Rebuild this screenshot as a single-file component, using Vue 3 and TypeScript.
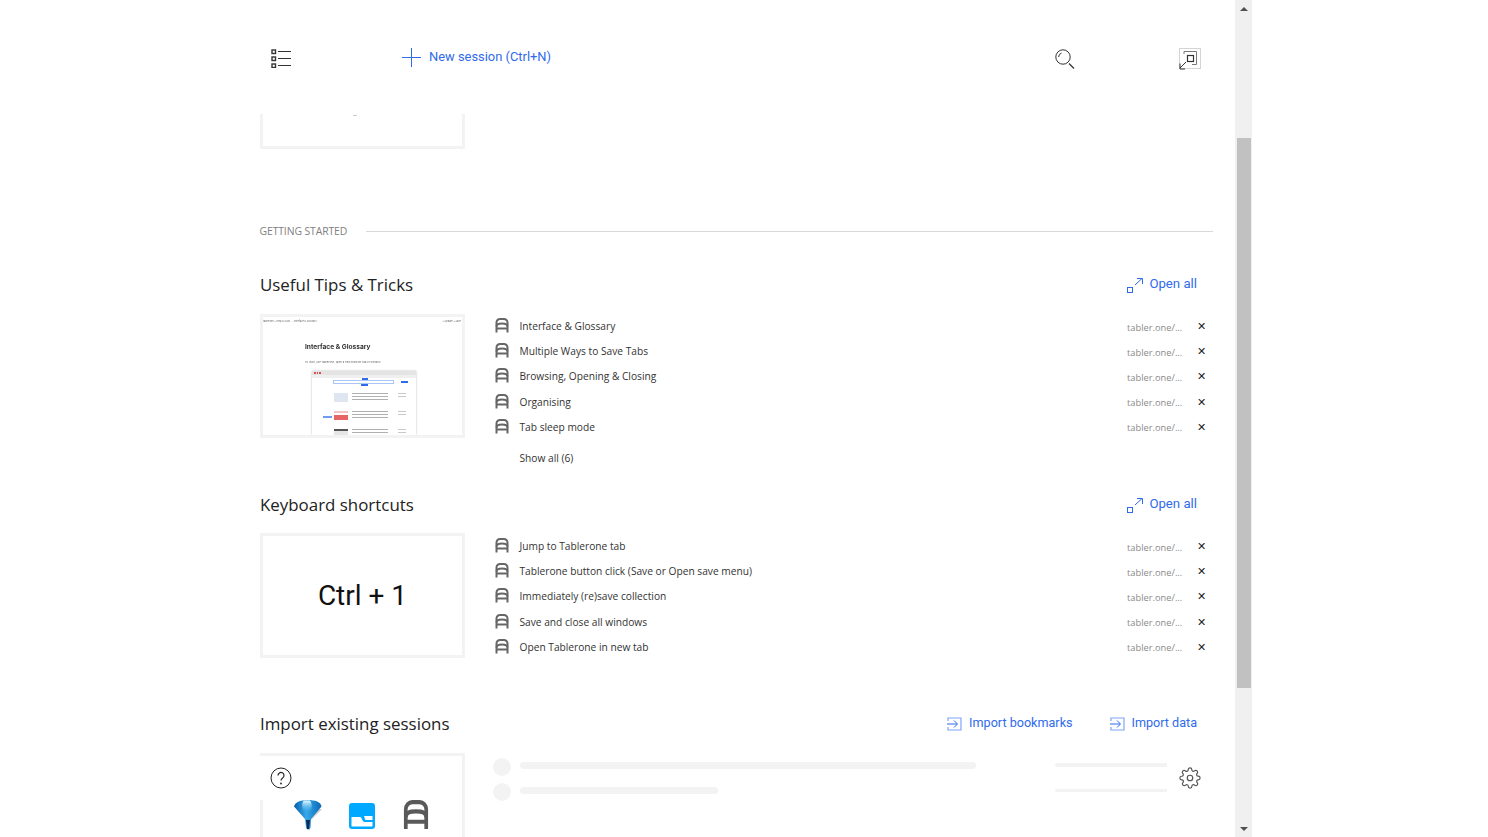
<script setup lang="ts">
interface Row { title: string }
const tips: Row[] = [
  { title: 'Interface & Glossary' },
  { title: 'Multiple Ways to Save Tabs' },
  { title: 'Browsing, Opening & Closing' },
  { title: 'Organising' },
  { title: 'Tab sleep mode' },
]
const keys: Row[] = [
  { title: 'Jump to Tablerone tab' },
  { title: 'Tablerone button click (Save or Open save menu)' },
  { title: 'Immediately (re)save collection' },
  { title: 'Save and close all windows' },
  { title: 'Open Tablerone in new tab' },
]
const miniRows = [1, 2, 3]
</script>

<template>
  <div class="shell">
    <div class="page">
      <header class="top">
        <svg class="ic-list" width="20" height="19" viewBox="0 0 20 19" fill="none" stroke="#333">
          <rect x="1" y="1" width="3.500" height="3.500" stroke-width="1.400" />
          <rect x="1" y="8" width="3.500" height="3.500" stroke-width="1.400" />
          <rect x="1" y="15" width="3.500" height="3.500" stroke-width="1.400" />
          <path d="M7 2.500h13M7 9.500h13M7 16.500h13" stroke-width="1" />
        </svg>
        <div class="new">
          <svg width="19" height="19" viewBox="0 0 19 19" stroke="#2f6bec" fill="none"><path d="M9.500 0v19M0 9.500h19" /></svg>
          <span>New session (Ctrl+N)</span>
        </div>
        <svg class="ic-search" width="20" height="20" viewBox="0 0 20 20" fill="none" stroke="#333">
          <circle cx="8" cy="8" r="7.200" />
          <path d="M3.600 8a4.400 4.400 0 0 1 3-4" />
          <path d="M14 14.500l5 5" stroke-width="1.300" />
        </svg>
        <svg class="ic-expand" width="22" height="22" viewBox="0 0 22 22" fill="none">
          <rect x="0.500" y="0.500" width="21" height="20" stroke="#d4d4d4" />
          <path d="M5 6V3.500h12.500v13H13" stroke="#777" />
          <rect x="8.500" y="7.500" width="6" height="6" stroke="#333" stroke-width="1.200" />
          <path d="M7 14l-6 6M1 15.500V21h5" stroke="#333" />
        </svg>
      </header>

      <div class="content">
        <div class="stub"><i></i></div>

        <div class="label">
          <span>GETTING STARTED</span>
          <hr />
        </div>

        <section class="tips">
          <div class="head">
            <h2>Useful Tips &amp; Tricks</h2>
            <a class="link open">
              <svg width="16" height="15" viewBox="0 0 16 15" fill="none" stroke="#2f6bec">
                <rect x="0.500" y="9.500" width="5" height="5" />
                <path d="M8 7l7-6.500M10 .500h5.500V6" />
              </svg>
              Open all
            </a>
          </div>
          <div class="body">
            <div class="card thumb">
              <div class="m-top"><span>tablerone • Help &amp; Guid...  ·  Interface &amp; Glossary</span><span>◦ Update  ▪ Save</span></div>
              <div class="m-title">Interface &amp; Glossary</div>
              <div class="m-sub">To start, use Tablerone, open a new browser tab or window.</div>
              <div class="m-browser">
                <div class="m-bar"><b></b><b></b><b></b></div>
                <div class="m-addr"></div>
                <div class="m-search"><i></i><em></em></div>
                <span class="m-btn right"></span>
                <span class="m-btn left"></span>
                <div class="m-block" v-for="n in miniRows" :key="n">
                  <div class="m-pic" :class="{ red: n === 2, dark: n === 3 }"></div>
                  <div class="m-lines"><s></s><s></s><s></s></div>
                  <div class="m-side"><s></s><s></s></div>
                </div>
              </div>
            </div>
            <ul class="rows">
              <li v-for="r in tips" :key="r.title">
                <svg class="logo" width="14" height="15" viewBox="0 0 14 15" fill="none" stroke="#666" stroke-width="2">
                  <path d="M1.500 14.500V4.500A3.500 3.500 0 0 1 5 1h4a3.500 3.500 0 0 1 3.500 3.500v10" />
                  <path d="M1.500 8.500C1.500 6 3.500 5.500 7 5.500s5.500.5 5.500 3M1.500 10.500h11" />
                </svg>
                <span class="title">{{ r.title }}</span>
                <span class="url">tabler.one/...</span>
                <span class="close">✕</span>
              </li>
              <li class="show"><span class="title">Show all (6)</span></li>
            </ul>
          </div>
        </section>

        <section class="keys">
          <div class="head">
            <h2>Keyboard shortcuts</h2>
            <a class="link open">
              <svg width="16" height="15" viewBox="0 0 16 15" fill="none" stroke="#2f6bec">
                <rect x="0.500" y="9.500" width="5" height="5" />
                <path d="M8 7l7-6.500M10 .500h5.500V6" />
              </svg>
              Open all
            </a>
          </div>
          <div class="body">
            <div class="card shortcut">Ctrl + 1</div>
            <ul class="rows">
              <li v-for="r in keys" :key="r.title">
                <svg class="logo" width="14" height="15" viewBox="0 0 14 15" fill="none" stroke="#666" stroke-width="2">
                  <path d="M1.500 14.500V4.500A3.500 3.500 0 0 1 5 1h4a3.500 3.500 0 0 1 3.500 3.500v10" />
                  <path d="M1.500 8.500C1.500 6 3.500 5.500 7 5.500s5.500.5 5.500 3M1.500 10.500h11" />
                </svg>
                <span class="title">{{ r.title }}</span>
                <span class="url">tabler.one/...</span>
                <span class="close">✕</span>
              </li>
            </ul>
          </div>
        </section>

        <section class="imports">
          <div class="head">
            <h2>Import existing sessions</h2>
            <div class="links">
              <a class="link">
                <svg width="15" height="14" viewBox="0 0 15 14" fill="none" stroke="#2f6bec">
                  <path d="M1 4V1h13v12H1v-3" stroke="#7fa6f5" stroke-width="1.200" />
                  <path d="M0 7h10M7 3.500L10.500 7 7 10.500" />
                </svg>
                Import bookmarks
              </a>
              <a class="link">
                <svg width="15" height="14" viewBox="0 0 15 14" fill="none" stroke="#2f6bec">
                  <path d="M1 4V1h13v12H1v-3" stroke="#7fa6f5" stroke-width="1.200" />
                  <path d="M0 7h10M7 3.500L10.500 7 7 10.500" />
                </svg>
                Import data
              </a>
            </div>
          </div>
          <div class="body">
            <div class="card sources">
              <svg class="help" width="22" height="22" viewBox="0 0 22 22" fill="none" stroke="#222">
                <circle cx="11" cy="11" r="10" />
                <path d="M8 8.500a3 3 0 1 1 4.600 2.500c-1 .7-1.600 1.300-1.600 2.500" stroke-width="1.200" />
                <circle cx="11" cy="16.500" r=".9" fill="#222" stroke="none" />
              </svg>
              <div class="logos">
                <svg width="28" height="31" viewBox="0 0 28 31">
                  <defs>
                    <linearGradient id="fn" x1="0" x2="1" y1="0" y2="0">
                      <stop offset="0" stop-color="#0a5ea8" />
                      <stop offset=".45" stop-color="#35a8ea" />
                      <stop offset="1" stop-color="#0867b5" />
                    </linearGradient>
                    <linearGradient id="fh" x1="0" x2="0" y1="0" y2="1">
                      <stop offset="0" stop-color="#eefaff" />
                      <stop offset="1" stop-color="#5cc0f5" stop-opacity="0" />
                    </linearGradient>
                  </defs>
                  <path d="M3 9L12 20l1 10h3l1-10L28 9z" fill="#c9c9c9" />
                  <path d="M0 6.500C1 2 7 0 14 0s13 2 13.500 6.500L17 19l-.5 8.500c-.5 2-4 2-4.500 0L11 19z" fill="url(#fn)" />
                  <path d="M10 .500C7.500 3 7.500 7 10 12h6c2.500-5 2-9 0-11.500z" fill="url(#fh)" />
                  <path d="M12 20l1 9h2l1-9z" fill="#0b2a55" />
                </svg>
                <svg width="26" height="26" viewBox="0 0 26 26">
                  <rect width="26" height="26" rx="3" fill="#00a8ff" />
                  <path d="M2.500 14H11c2 0 2 5 5 5h7.500v4.500h-21z" fill="#fff" />
                  <path d="M15 13h8.500v4H17c-1.500 0-1.500-4-2-4z" fill="#fff" />
                </svg>
                <svg width="26" height="31" viewBox="0 0 14 15" fill="none" stroke="#595959" stroke-width="2" preserveAspectRatio="none">
                  <path d="M1.500 14V4.500A3.500 3.500 0 0 1 5 1h4a3.500 3.500 0 0 1 3.500 3.500V14" />
                  <path d="M1.500 8.500C1.500 6 3.500 5.500 7 5.500s5.500.5 5.500 3M1.500 10.500h11" />
                </svg>
              </div>
            </div>
            <div class="skeleton">
              <div class="sk-row"><i></i><b class="long"></b><em></em></div>
              <div class="sk-row"><i></i><b class="short"></b><em class="thin"></em></div>
              <svg class="gear" width="22" height="22" viewBox="0 0 24 24" fill="none" stroke="#555" stroke-width="1.300" stroke-linejoin="round">
                <circle cx="12" cy="12" r="3" />
                <path d="M19.400 15a1.650 1.650 0 0 0 .33 1.820l.06.06a2 2 0 1 1-2.830 2.830l-.06-.06a1.650 1.650 0 0 0-1.820-.33 1.650 1.650 0 0 0-1 1.510V21a2 2 0 1 1-4 0v-.09A1.650 1.650 0 0 0 9 19.400a1.650 1.650 0 0 0-1.820.33l-.06.06a2 2 0 1 1-2.830-2.830l.06-.06a1.650 1.650 0 0 0 .33-1.820 1.650 1.650 0 0 0-1.510-1H3a2 2 0 1 1 0-4h.09A1.650 1.650 0 0 0 4.600 9a1.650 1.650 0 0 0-.33-1.820l-.06-.06a2 2 0 1 1 2.830-2.830l.06.06a1.650 1.650 0 0 0 1.820.33H9a1.650 1.650 0 0 0 1-1.510V3a2 2 0 1 1 4 0v.09a1.650 1.650 0 0 0 1 1.510 1.650 1.650 0 0 0 1.820-.33l.06-.06a2 2 0 1 1 2.830 2.830l-.06.06a1.650 1.650 0 0 0-.33 1.820V9a1.650 1.650 0 0 0 1.510 1H21a2 2 0 1 1 0 4h-.09a1.650 1.650 0 0 0-1.510 1z" />
              </svg>
            </div>
          </div>
        </section>
      </div>
    </div>

    <div class="scrollbar">
      <span class="arrow up"></span>
      <div class="track"><div class="thumb-bar"></div></div>
      <span class="arrow down"></span>
    </div>
  </div>
</template>

<style>
html, body { margin: 0; background: #fff; overflow: hidden; }
</style>

<style scoped>
.shell { display: flex; width: 1252px; height: 837px; overflow: hidden; font-family: "Open Sans", "Noto Sans", sans-serif; color: #222; }
.page { width: 1235px; height: 837px; overflow: hidden; flex: none; }

.top { height: 114px; display: flex; align-items: flex-start; padding: 48px 0 0 271px; box-sizing: border-box; }
.ic-list { margin-top: 1px; flex: none; }
.new { display: flex; align-items: flex-start; margin-left: 111px; width: 653px; flex: none; color: #2f6bec; font: 12.900px/18px Roboto, sans-serif; }
.new svg { margin-right: 8px; flex: none; }
.ic-search { margin-top: 1px; flex: none; }
.ic-expand { margin-left: 104px; flex: none; }

.content { padding-left: 260px; width: 953px; }
.stub { width: 205px; height: 35px; box-sizing: border-box; border: 3px solid #f3f3f3; border-top: 0; display: flex; justify-content: center; }
.stub i { width: 4px; height: 1px; background: #ccc; margin: 1px 0 0 -16px; }

.label { display: flex; align-items: center; margin-top: 72px; height: 20px; font-size: 10.400px; color: #808080; letter-spacing: -0.1px; margin-left: -0.500px; }
.label span { width: 106px; flex: none; }
.label hr { flex: 1; height: 1px; margin: 0; border: 0; background: #d8d8d8; }

.tips { margin-top: 31px; }
.keys { margin-top: 23px; }
.imports { margin-top: 52px; }

.head { display: flex; justify-content: space-between; align-items: flex-start; height: 24px; padding-right: 16px; }
h2 { margin: 0; font-weight: 400; font-size: 16.900px; line-height: 24px; color: #222; }
.tips h2, .imports h2 { margin-top: 1px; }
.link { display: inline-flex; align-items: center; color: #2f6bec; font: 13.200px/18px Roboto, sans-serif; }
.open { gap: 7px; margin-top: 2px; }
.tips .open { margin-top: 3px; }
.open svg { margin-top: 2px; margin-left: 1px; margin-right: -1px; }
.links { display: flex; gap: 37px; margin-top: 3px; }
.links .link { gap: 7px; font-size: 12.600px; }
.links svg { margin-top: 1px; }

.body { display: flex; margin-top: 18px; }
.card { width: 205px; height: 124px; box-sizing: border-box; border: 3px solid #f3f3f3; flex: none; }
.keys .body { margin-top: 16px; }
.keys .card { height: 125px; }
.keys .rows { margin-top: 0.300px; height: 126px; }

.shortcut { display: flex; align-items: center; justify-content: center; font: 28px Roboto, sans-serif; color: #111; }

.rows { list-style: none; margin: -0.500px 0 0; padding: 0 0 0 30px; flex: 1; }
.rows li { display: flex; align-items: center; height: 25.200px; font-size: 10.200px; color: #333; }
.logo { flex: none; margin-right: 10.500px; margin-top: -1px; }
.title { flex: 1; }
.url { width: 69px; color: #8a8a8a; font-size: 9.300px; flex: none; margin-top: 2px; }
.close { width: 11px; margin-right: 6px; font: 11px/1 "DejaVu Sans", sans-serif; color: #222; flex: none; text-align: center; margin-top: 1px; }
.rows .show { padding-left: 24.500px; margin-top: 5.500px; }

.thumb { padding: 2px 0 0; overflow: hidden; font-family: Inter, sans-serif; }
.m-top { display: flex; justify-content: space-between; font-size: 2.400px; line-height: 5px; color: #666; padding: 0 1px 0 0; white-space: nowrap; filter: blur(.3px); }
.m-title { font-size: 6.600px; font-weight: 700; color: #333; margin: 19px 0 0 42px; line-height: 8px; filter: blur(.2px); }
.m-sub { font-size: 2.700px; color: #666; margin: 9px 0 0 42px; line-height: 5px; filter: blur(.2px); }
.m-browser { position: relative; width: 104px; height: 64px; margin: 6px 0 0 49px; box-shadow: 0 0 2px #bbb; overflow: hidden; background: #fff; filter: blur(.25px); }
.m-bar { height: 4px; background: #e4e4e4; display: flex; gap: 1px; align-items: center; padding-left: 2px; }
.m-bar b { width: 1.500px; height: 1.500px; background: #e05050; }
.m-addr { height: 3px; background: #f0f0f0; }
.m-search { height: 2px; margin: 2px 22px 0 21px; border: 1px solid #a9c6f8; position: relative; }
.m-search i { position: absolute; left: 28px; top: -3px; width: 6px; height: 2px; background: #2f6bec; }
.m-search em { position: absolute; left: 27px; top: 3px; width: 7px; height: 2px; background: #2f6bec; }
.m-btn { position: absolute; height: 2px; background: #2f6bec; }
.m-btn.right { left: 89px; top: 10px; width: 7px; }
.m-btn.left { left: 11px; top: 45px; width: 9px; background: #6f9cf0; }
.m-block { display: flex; gap: 4px; margin: 9px 10px 0 22px; height: 9px; }
.m-pic { width: 14px; height: 9px; background: #dfe6f2; flex: none; }
.m-pic.red { background: linear-gradient(180deg, #f3c4c4 0 20%, #fff 20% 50%, #e86565 50%); }
.m-pic.dark { background: linear-gradient(180deg, #555 0 25%, #e6e6e6 25%); }
.m-lines { flex: 1; display: flex; flex-direction: column; gap: 2px; padding-right: 6px; }
.m-side { width: 8px; display: flex; flex-direction: column; gap: 2px; }
.m-block s { display: block; height: 1px; background: #b0b0b0; }
.m-block .m-side s { background: #c8c8c8; }

.sources { position: relative; height: 100px; border-bottom: 0; display: flex; flex-direction: column; align-items: stretch; }
.help { position: absolute; left: 7px; top: 11px; }
.sources::before { content: ""; position: absolute; left: -3px; top: 0; width: 6px; height: 44px; background: #fff; }
.logos { display: flex; align-items: center; margin: 44px 0 0 31px; gap: 27px; }
.logos svg:nth-child(3) { margin-left: 1px; }

.skeleton { flex: 1; position: relative; padding: 5px 0 0 28px; }
.sk-row { display: flex; align-items: center; height: 18px; margin-bottom: 7px; }
.sk-row i { width: 18px; height: 18px; border-radius: 50%; background: #f3f3f3; flex: none; }
.sk-row b { height: 7px; border-radius: 4px; background: #f3f3f3; margin: -3px 0 0 9px; flex: none; }
.sk-row .long { width: 456px; }
.sk-row .short { width: 198px; }
.sk-row em { width: 112px; height: 4px; background: #f3f3f3; border-radius: 2px 0 0 2px; position: absolute; left: 590px; top: 10px; }
.sk-row em.thin { top: 36px; height: 3px; }
.gear { position: absolute; left: 714px; top: 14px; }

.scrollbar { width: 17px; height: 837px; background: #f0f0f0; display: flex; flex-direction: column; align-items: center; flex: none; }
.arrow { width: 0; height: 0; border-left: 4px solid transparent; border-right: 4px solid transparent; flex: none; }
.up { border-bottom: 4px solid #505050; margin: 7px 0 6px; }
.down { border-top: 4px solid #505050; margin: 6px 0 6px; }
.track { flex: 1; width: 100%; padding-top: 121px; box-sizing: border-box; display: flex; justify-content: center; }
.thumb-bar { width: 14px; height: 550px; background: #c1c1c1; margin-left: 1px; }
</style>
